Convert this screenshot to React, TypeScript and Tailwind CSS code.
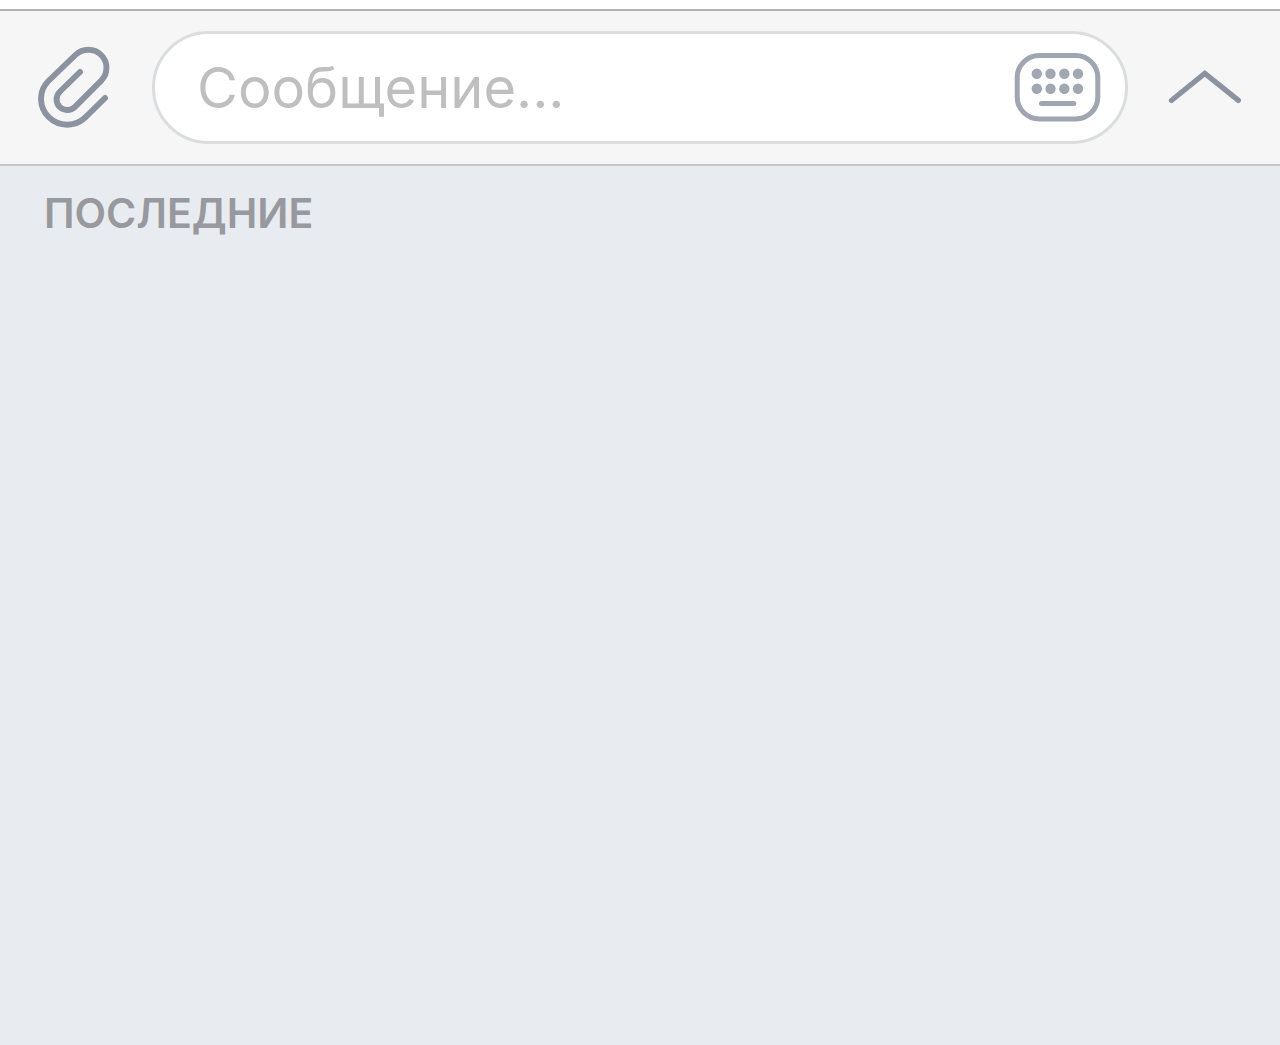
import React from "react";

function PaperclipIcon() {
  return (
    <svg viewBox="36 45 76 86" className="h-[86px] w-[76px]" fill="none" stroke="#8a939f" strokeWidth="5.9" strokeLinecap="round" strokeLinejoin="round" aria-hidden="true">
      <path d="M80 72L60 91.5C55.5 96 55.5 102.5 59.5 106.8C63.8 111.2 70.7 111 75 106.8L101.2 80.6C108.2 73.6 108.2 62 101.2 55C94.2 48 82.6 48 75.4 55L48.4 81C38.4 90.8 38.6 107.2 48.8 117.2C59 127.2 75.5 127.2 85.6 117.2L105 98" />
    </svg>
  );
}

function KeyboardIcon() {
  const columns = [1036.8, 1050.5, 1064.3, 1078];
  const rows = [73.7, 88.8];
  return (
    <svg viewBox="1014 52 87 71" className="h-[71px] w-[87px]" fill="none" stroke="#9fa6b1" strokeWidth="5" strokeLinecap="round" aria-hidden="true">
      <rect x="1017.2" y="55.6" width="80.6" height="63.4" rx="22" />
      {rows.map((y) =>
        columns.map((x) => <circle key={`${x}-${y}`} cx={x} cy={y} r="5.2" fill="#a2a8b3" stroke="none" />)
      )}
      <path d="M1041.5 103.4H1073.8" />
    </svg>
  );
}

function ChevronIcon() {
  return (
    <svg viewBox="1168 69 74 38" className="h-[38px] w-[74px]" fill="none" stroke="#8a939f" strokeWidth="5.2" strokeLinecap="round" strokeLinejoin="miter" aria-hidden="true">
      <path d="M1171.4 100.4L1204.8 73.4L1238.4 100.4" />
    </svg>
  );
}

export default function App() {
  return (
    <div className="flex min-h-screen flex-col bg-[#e8ebf0] font-['Inter','Liberation_Sans',sans-serif]">
      <form
        className="border-t-[9px] border-white bg-[#f6f6f6]"
        onSubmit={(event) => event.preventDefault()}
      >
        <div className="flex items-center border-y-2 border-t-[#b2b2b3] border-b-[#c3c5c9] py-5 pr-[38px] pl-9">
          <button type="button" aria-label="Прикрепить файл" className="shrink-0">
            <PaperclipIcon />
          </button>
          <div className="ml-10 flex h-[113px] min-w-0 flex-1 items-center rounded-full border-[3px] border-[#dcdddf] bg-white pr-6 pl-[42px]">
            <input
              type="text"
              aria-label="Сообщение"
              placeholder="Сообщение..."
              className="min-w-0 flex-1 bg-transparent text-[56px] leading-[72px] text-[#5f6368] outline-none placeholder:text-[#bfbfc0] placeholder:opacity-100"
            />
            <button type="button" aria-label="Клавиатура" className="shrink-0">
              <KeyboardIcon />
            </button>
          </div>
          <button type="button" aria-label="Развернуть" className="ml-10 shrink-0">
            <ChevronIcon />
          </button>
        </div>
      </form>
      <main className="px-11 pt-[23px]">
        <h2 className="text-[41px] leading-[48px] font-semibold text-[#97999e]">ПОСЛЕДНИЕ</h2>
      </main>
    </div>
  );
}
